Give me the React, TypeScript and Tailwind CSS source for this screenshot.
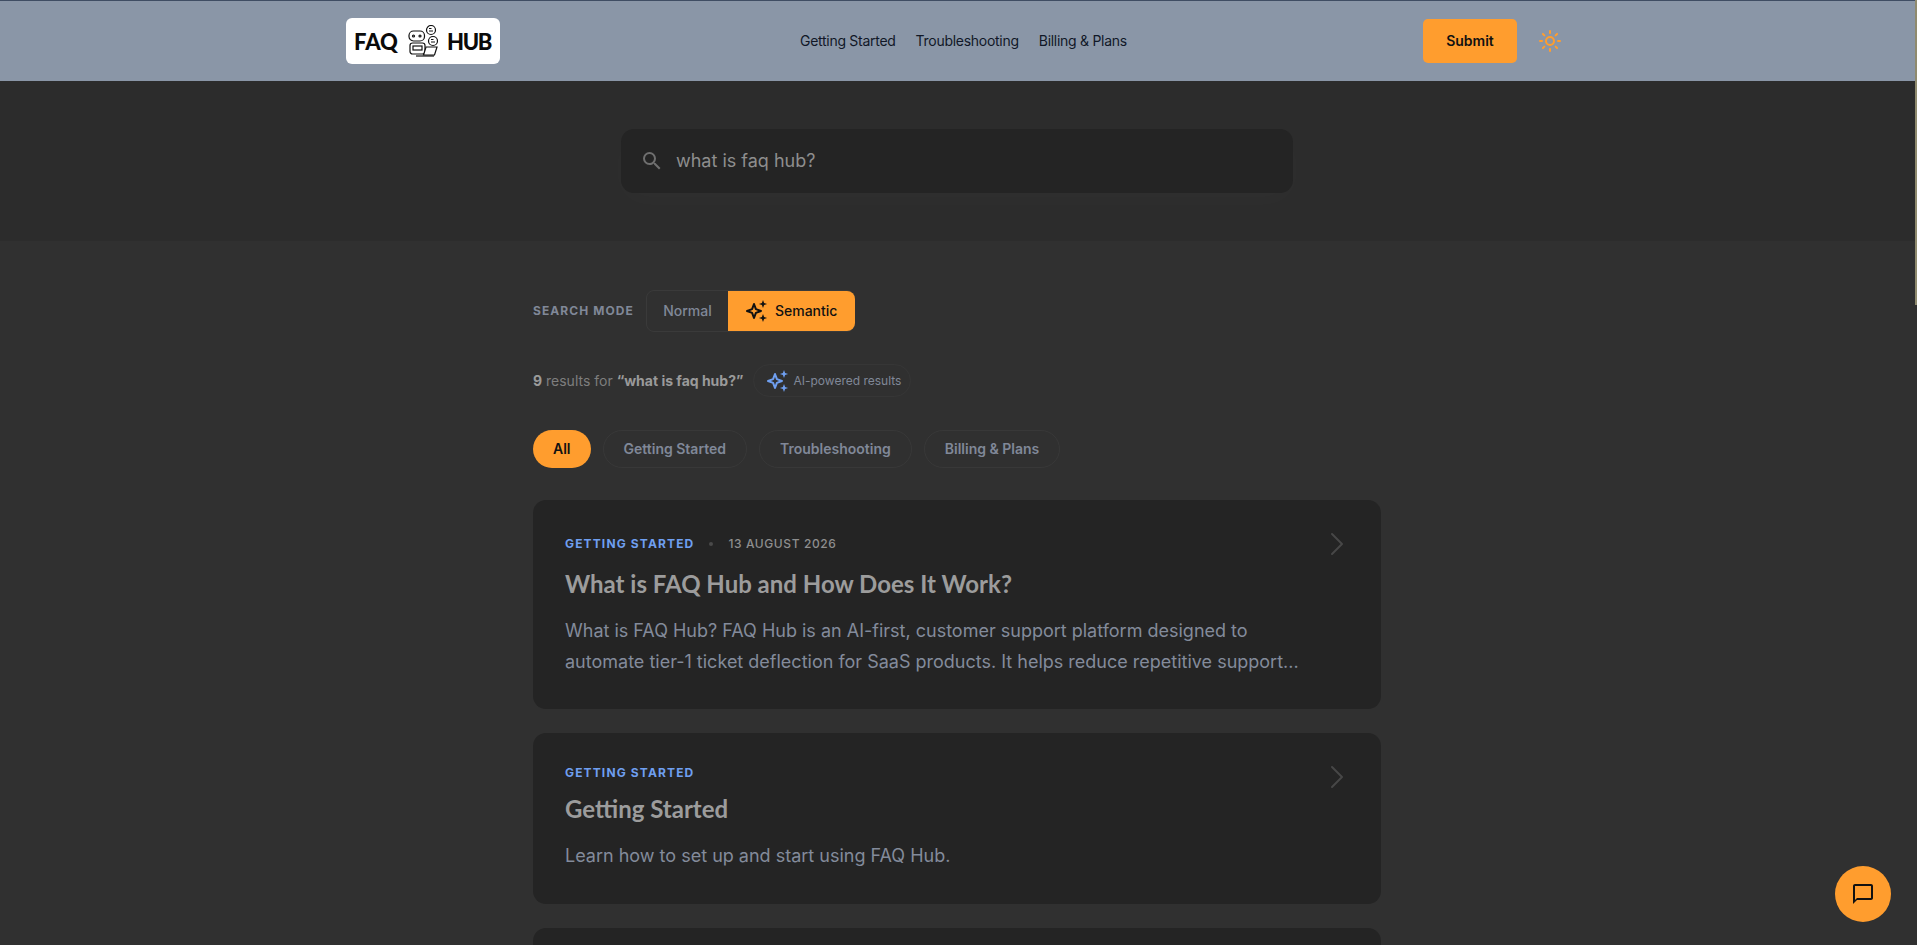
import React from 'react';
import { Sun, ChevronRight } from 'lucide-react';

const inter = "font-['Inter',sans-serif]";
const heading = "font-['Lato',sans-serif]";

const Sparkles = ({ className }: { className: string }) => (
  <svg viewBox="0 0 24 24" fill="none" stroke="currentColor" strokeWidth="2" strokeLinejoin="round" className={className}>
    <path d="M10 5l1.9 5.1L17 12l-5.1 1.9L10 19l-1.9-5.1L3 12l5.1-1.9Z" />
    <path fill="currentColor" strokeWidth="0" d="M19 1l1.1 3 3 1-3 1-1.1 3-1.1-3-3-1 3-1Z" />
    <path fill="currentColor" strokeWidth="0" d="M19 15l1.1 3 3 1-3 1-1.1 3-1.1-3-3-1 3-1Z" />
  </svg>
);

const RobotLogo = () => (
  <svg viewBox="0 0 30 32" fill="none" stroke="#111" strokeWidth="1.2" className="w-[30px] h-[32px]">
    <rect x="1" y="6" width="15.5" height="10" rx="4.5" />
    <circle cx="5.5" cy="11" r="1" />
    <circle cx="12" cy="11" r="1" />
    <rect x="2" y="18" width="15" height="11" rx="2.5" />
    <rect x="5" y="21" width="9" height="4" />
    <circle cx="23" cy="5" r="4.5" fill="#fff" />
    <path d="M21 3.5h2.5M21 6h4" />
    <circle cx="25" cy="16" r="4.5" fill="#fff" />
    <path d="M23 14.5h2.5M23 17h4" />
    <path d="M18 22h11l-2.5 8H15.5Z" fill="#fff" />
    <path d="M8 31h18" />
  </svg>
);

const SearchGlyph = ({ className }: { className: string }) => (
  <svg viewBox="0 0 24 24" fill="currentColor" className={className}>
    <path d="M15.5 14h-.79l-.28-.27A6.471 6.471 0 0 0 16 9.5 6.5 6.5 0 1 0 9.5 16c1.61 0 3.09-.59 4.23-1.57l.27.28v.79l5 4.99L20.49 19l-4.99-5zm-6 0C7.01 14 5 11.99 5 9.5S7.01 5 9.5 5 14 7.01 14 9.5 11.99 14 9.5 14z" />
  </svg>
);

const ChatGlyph = ({ className }: { className: string }) => (
  <svg viewBox="0 0 24 24" fill="currentColor" className={className}>
    <path d="M20 2H4c-1.1 0-2 .9-2 2v18l4-4h14c1.1 0 2-.9 2-2V4c0-1.1-.9-2-2-2zm0 14H6l-2 2V4h16v12z" />
  </svg>
);

const navLinks = ['Getting Started', 'Troubleshooting', 'Billing & Plans'];
const filters = ['Getting Started', 'Troubleshooting', 'Billing & Plans'];

const ResultCard = ({ date, title, lines }: { date?: string; title: string; lines: string[] }) => (
  <div className="relative rounded-[13px] bg-[#242424] p-8">
    <ChevronRight className="absolute right-[24px] top-[24px] w-10 h-10 text-[#474747]" strokeWidth={1.2} />
    <div className={`flex items-center ${date ? 'h-6' : 'h-4'}`}>
      <span className="text-xs font-bold tracking-[0.095em] text-[#6f9ff0] uppercase">Getting Started</span>
      {date && (
        <>
          <span className="w-1 h-1 mx-[15px] rounded-full bg-[#4a4a4a]" />
          <span className="text-xs font-medium tracking-[0.05em] text-[#8e8e8e] uppercase">{date}</span>
        </>
      )}
    </div>
    <h2 className={`${heading} mt-3 text-[24px] leading-8 font-bold text-[#9c9c9c]`}>{title}</h2>
    <p className="mt-4 text-lg leading-[30.6px] text-[#838b9b]">
      {lines.map((l) => (
        <span key={l} className="block">{l}</span>
      ))}
    </p>
  </div>
);

export default function App() {
  return (
    <div className={`${inter} flex h-screen overflow-hidden bg-[#303030]`}>
      <div className="flex-1 min-w-0">
        <header className="h-[81px] border-t border-[#3f4d63] bg-[#8a96a7]">
          <div className="flex items-center h-full pl-[346px] pr-[353px]">
            <div className="flex items-center w-[154px] h-[46px] rounded-md bg-white pl-[8px] font-['Lato',sans-serif] font-black text-[22px] text-[#0a0a0a]">
              <span className="w-[45px]">FAQ</span>
              <span className="ml-[9px] mr-[9px]"><RobotLogo /></span>
              <span className="tracking-[-0.06em]">HUB</span>
            </div>
            <nav className="flex items-center gap-5 ml-[300px] text-sm tracking-[-0.02em] text-[#111827]">
              {navLinks.map((n) => (
                <span key={n}>{n}</span>
              ))}
            </nav>
            <div className="flex items-center ml-auto gap-[21px]">
              <button className="w-[94px] h-11 rounded-[5px] bg-[#ff9d2e] text-sm font-semibold text-[#111]">Submit</button>
              <Sun className="w-6 h-6 text-[#ff9d2e]" strokeWidth={2} />
            </div>
          </div>
        </header>

        <section className="h-[160px] bg-[#2c2c2c] pt-12">
          <div className="flex items-center w-[672px] h-16 ml-[621px] rounded-[13px] bg-[#242424] pl-[19px] shadow-[0_8px_30px_rgba(255,255,255,0.02)]">
            <SearchGlyph className="w-6 h-6 text-[#6f6f6f]" />
            <span className="ml-3 text-lg text-[#8e8e8e]">what is faq hub?</span>
          </div>
        </section>

        <main className="w-[848px] ml-[533px] pt-[49px]">
          <div className="flex items-center">
            <span className="text-xs font-bold tracking-[0.09em] text-[#808898] uppercase">Search mode</span>
            <div className="flex ml-[12px] h-[42px] rounded-lg border border-[#3a3a3a]">
              <span className="flex items-center w-[81px] justify-center text-sm font-medium text-[#808898]">Normal</span>
              <span className="flex items-center w-[127px] -mr-px pl-[16px] gap-[7px] rounded-r-lg bg-[#ff9d2e] text-sm font-medium text-[#111]">
                <Sparkles className="w-6 h-6" />
                Semantic
              </span>
            </div>
          </div>

          <div className="flex items-center mt-[32px]">
            <span className="text-sm text-[#7e7e7e]">
              <b className="font-bold text-[#9a9a9a]">9</b> results for <b className="font-bold text-[#9a9a9a]">“what is faq hub?”</b>
            </span>
            <span className="flex items-center h-[33px] ml-[10px] pl-[11px] pr-[9px] gap-[4px] rounded-full border border-[#363636] text-xs text-[#808898]">
              <Sparkles className="w-6 h-6 text-[#6f9ff0]" />
              AI-powered results
            </span>
          </div>

          <div className="flex items-center gap-3 mt-[33px]">
            <span className="flex items-center h-[38px] px-5 rounded-full bg-[#ff9d2e] text-sm font-semibold text-[#111]">All</span>
            {filters.map((f) => (
              <span key={f} className="flex items-center h-[38px] px-5 rounded-full border border-[#383838] text-sm font-semibold text-[#808898]">{f}</span>
            ))}
          </div>

          <div className="flex flex-col gap-6 mt-8">
            <ResultCard
              date="13 August 2026"
              title="What is FAQ Hub and How Does It Work?"
              lines={[
                'What is FAQ Hub? FAQ Hub is an AI-first, customer support platform designed to',
                'automate tier-1 ticket deflection for SaaS products. It helps reduce repetitive support...',
              ]}
            />
            <ResultCard title="Getting Started" lines={['Learn how to set up and start using FAQ Hub.']} />
            <div className="h-40 rounded-[13px] bg-[#242424]" />
          </div>
        </main>

        <button className="fixed right-[26px] bottom-[23px] flex items-center justify-center w-14 h-14 rounded-full bg-[#ff9d2e] text-[#111]">
          <ChatGlyph className="w-6 h-6" />
        </button>
      </div>
      <div className="w-[2px] h-[305px] bg-[#8f8a6e]" />
    </div>
  );
}
